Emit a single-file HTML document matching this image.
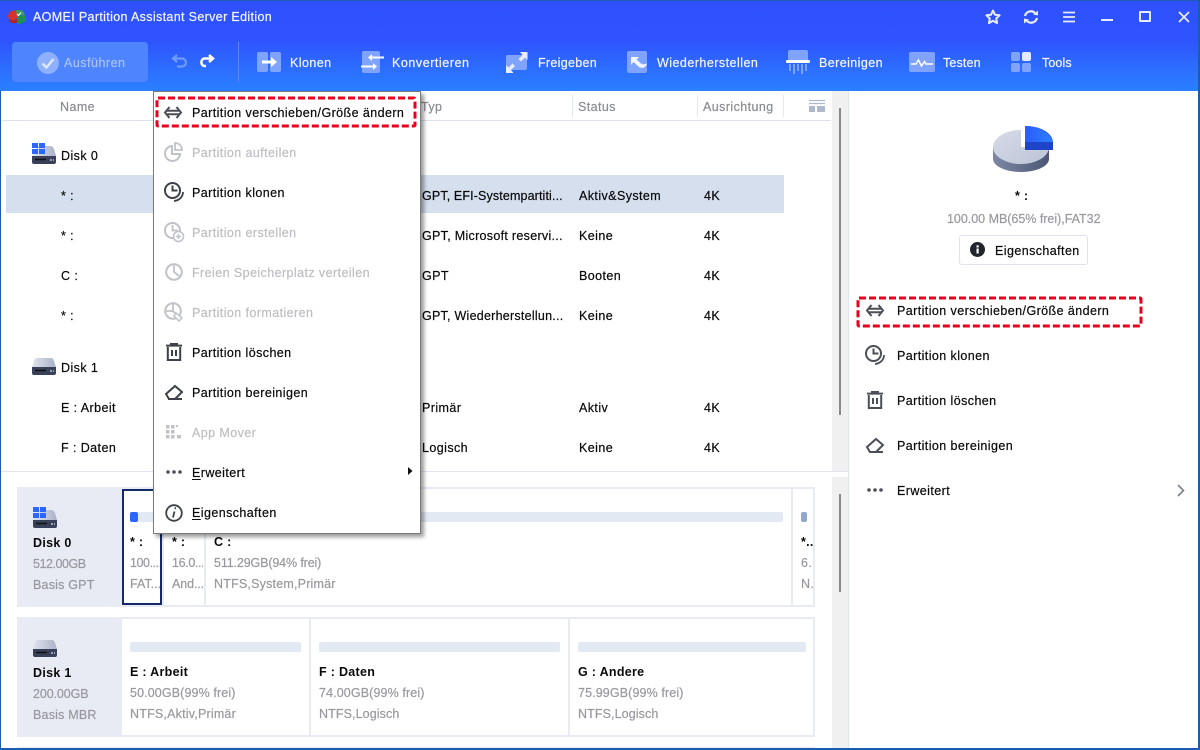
<!DOCTYPE html>
<html><head><meta charset="utf-8"><style>
*{box-sizing:border-box}
html,body{margin:0;padding:0;width:1200px;height:750px;overflow:hidden;background:#fff}
body{position:relative;font-family:"Liberation Sans","DejaVu Sans",sans-serif;font-size:12.5px;color:#0a0a0a}
.a{position:absolute}
.t{position:absolute;line-height:20px;height:20px;white-space:nowrap;letter-spacing:.42px;-webkit-text-stroke:.2px currentColor}
.w{color:#f2f5ff}
.g{color:#98999e}
.d{color:#bcbec3}
.h{color:#8a8c92}
.b{font-weight:bold;letter-spacing:.3px;-webkit-text-stroke:0}
svg{position:absolute;overflow:visible}
u{text-underline-offset:2px}
</style></head><body>
<div class="a" style="left:0;top:0;width:1200px;height:91px;background:linear-gradient(#2f50ff 0,#2f54ff 40px,#2a80ff 91px)"></div>
<div class="a" style="left:0;top:0;width:1200px;height:1px;background:#1d5bb0"></div>

<svg style="left:8px;top:9px" width="19" height="16" viewBox="0 0 19 16"><path d="M0 7a7 6 0 0 1 9-5.500L10 8l-5 4-4-1.500z" fill="#d8322c"/><path d="M8 1l7 .5 2 4.500-8 1z" fill="#36a35a"/><path d="M9 7l9-.5V12l-7 3.500-2-1z" fill="#1d9150"/><path d="M1 9.500l4 2.500 4-2.500v4l-4 1-4-2z" fill="#a82626"/><path d="M9 5l1.500 1.500L13 3.500" fill="none" stroke="#fff" stroke-width="1"/></svg>
<span class="t w" style="left:33px;top:7px;letter-spacing:.35px">AOMEI Partition Assistant Server Edition</span>

<svg style="left:985px;top:9px" width="16" height="16" viewBox="0 0 16 16"><path d="M8 1.500l2 4.200 4.600.6-3.400 3.200.9 4.600L8 11.800l-4.100 2.300.9-4.600L1.400 6.300 6 5.700z" fill="none" stroke="#e6ebff" stroke-width="2" stroke-linejoin="round"/></svg>
<svg style="left:1023px;top:9px" width="16" height="16" viewBox="0 0 16 16"><path d="M2 7a6 6 0 0 1 10-3M14 9a6 6 0 0 1-10 3" fill="none" stroke="#e6ebff" stroke-width="2.200"/><path d="M10 5.500l5 1 0-5zM6 10.500l-5-1 0 5z" fill="#e6ebff"/></svg>
<svg style="left:1063px;top:11px" width="12" height="12" viewBox="0 0 12 12"><path d="M0 1.500h12M0 6h12M0 10.500h12" stroke="#e6ebff" stroke-width="1.800"/></svg>
<div class="a" style="left:1101px;top:19px;width:12px;height:2px;background:#e6ebff"></div>
<div class="a" style="left:1139px;top:11px;width:12px;height:11px;border:2px solid #e6ebff;border-radius:1px"></div>
<svg style="left:1178px;top:11px" width="12" height="12" viewBox="0 0 12 12"><path d="M1 1l10 10M11 1L1 11" stroke="#e6ebff" stroke-width="1.800"/></svg>

<div class="a" style="left:12px;top:42px;width:136px;height:40px;background:#4f84ff;border-radius:4px"></div>
<svg style="left:37px;top:52px" width="22" height="22" viewBox="0 0 22 22"><circle cx="11" cy="11" r="11" fill="#8eb0ff"/><path d="M5.500 11.500l4 4 7-8.500" fill="none" stroke="#dfe8ff" stroke-width="2.400"/></svg>
<span class="t" style="left:64px;top:53px;color:#a9c2ff;letter-spacing:.5px">Ausführen</span>

<svg style="left:172px;top:54px" width="16" height="14" viewBox="0 0 16 14"><path d="M5 1L1 4.500 5 8M2 4.500h8a4 4 0 0 1 0 8H5" fill="none" stroke="#6f9aff" stroke-width="2.200"/></svg>
<svg style="left:198px;top:54px" width="16" height="14" viewBox="0 0 16 14"><path d="M11 1l4 3.500L11 8M14 4.500H6a4 4 0 0 0 0 7.500h2" fill="none" stroke="#fff" stroke-width="2.500"/></svg>
<div class="a" style="left:238px;top:42px;width:1px;height:40px;background:#5d85ff"></div>

<svg style="left:257px;top:52px" width="24" height="20" viewBox="0 0 24 20"><rect x="0" width="11" height="20" rx="2" fill="#7fa3ff"/><rect x="13" width="11" height="20" rx="2" fill="#7fa3ff"/><path d="M5 8.500h9V5l6 5-6 5v-3.500H5z" fill="#fff"/></svg>
<span class="t w" style="left:290px;top:53px">Klonen</span>

<svg style="left:361px;top:51px" width="24" height="22" viewBox="0 0 24 22"><rect x="1" width="18" height="22" rx="2" fill="#7fa3ff"/><path d="M23 7.500H11V10L7 6.500 11 3v2.500h12zM0 14.500h12V12l4 3.500-4 3.500v-2.500H0z" fill="#fff"/></svg>
<span class="t w" style="left:392px;top:53px;letter-spacing:.55px">Konvertieren</span>

<svg style="left:506px;top:52px" width="22" height="21" viewBox="0 0 22 21"><rect x="0" y="3" width="21" height="15" rx="2" fill="#7fa3ff"/><path d="M21.500 0v8l-2.500-2.500-4 4-2.500-2.500 4-4L14 0zM0 21v-8l2.500 2.500 4-4 2.500 2.500-4 4L7.500 21z" fill="#e8eeff"/></svg>
<span class="t w" style="left:538px;top:53px;letter-spacing:.3px">Freigeben</span>

<svg style="left:627px;top:51px" width="22" height="22" viewBox="0 0 22 22"><rect width="20" height="22" rx="2" fill="#7fa3ff"/><path d="M4 6h8l-2.500 2.500 4.500 4c1.500 1.200 3 1 6 0-1 4-5 5.500-8 3.500L6.500 11 4 14z" fill="#f2f5ff"/></svg>
<span class="t w" style="left:657px;top:53px;letter-spacing:.47px">Wiederherstellen</span>

<svg style="left:786px;top:50px" width="24" height="24" viewBox="0 0 24 24"><rect x="2" width="20" height="11" rx="2" fill="#7fa3ff"/><rect x="0" y="10" width="24" height="3" rx="1" fill="#fff"/><path d="M4 14v7M8 14v10M12 14v7M16 14v10M20 14v7" stroke="#7fa3ff" stroke-width="2"/></svg>
<span class="t w" style="left:819px;top:53px">Bereinigen</span>

<svg style="left:909px;top:52px" width="26" height="20" viewBox="0 0 26 20"><rect width="26" height="20" rx="2" fill="#7fa3ff"/><path d="M2 12h5l2.500-4 3 6 3-4.500 1.500 2.500h7" fill="none" stroke="#fff" stroke-width="1.500"/></svg>
<span class="t w" style="left:943px;top:53px;letter-spacing:.15px">Testen</span>

<svg style="left:1011px;top:52px" width="20" height="20" viewBox="0 0 20 20"><rect width="9" height="9" rx="2" fill="#7fa3ff"/><rect x="11" width="9" height="9" rx="2" fill="#e3eaff"/><rect y="11" width="9" height="9" rx="2" fill="#7fa3ff"/><rect x="11" y="11" width="9" height="9" rx="2" fill="#7fa3ff"/></svg>
<span class="t w" style="left:1042px;top:53px;letter-spacing:.1px">Tools</span>

<div class="a" style="left:0;top:91px;width:1px;height:659px;background:#1d5bb0"></div>
<div class="a" style="right:0;top:0;width:2px;height:750px;background:#1d5bb0"></div>
<div class="a" style="left:0;top:748px;width:1200px;height:2px;background:#1d5bb0"></div>

<!-- table header -->
<span class="t h" style="left:60px;top:97px">Name</span>
<span class="t h" style="left:421px;top:97px">Typ</span>
<span class="t h" style="left:578px;top:97px">Status</span>
<span class="t h" style="left:703px;top:97px;letter-spacing:.42px">Ausrichtung</span>
<div class="a" style="left:2px;top:120px;width:829px;height:1px;background:#dce2ee"></div>
<div class="a" style="left:572px;top:95px;width:1px;height:22px;background:#e6e9f1"></div>
<div class="a" style="left:697px;top:95px;width:1px;height:22px;background:#e6e9f1"></div>
<div class="a" style="left:783px;top:95px;width:1px;height:22px;background:#e6e9f1"></div>
<svg style="left:809px;top:100px" width="16" height="13" viewBox="0 0 16 13"><path d="M0 .5h16M0 3.500h16" stroke="#aeb9cd" stroke-width="1.200"/><rect y="6" width="6" height="6" fill="#aeb9cd"/><rect x="8" y="6" width="8" height="6" fill="#aeb9cd"/></svg>

<!-- scrollbars -->
<div class="a" style="left:832px;top:91px;width:16px;height:380px;background:#f0f0f0"></div>
<div class="a" style="left:839px;top:108px;width:2px;height:307px;background:#8a8a8a"></div>
<div class="a" style="left:848px;top:91px;width:1px;height:657px;background:#dfe4f2"></div>
<div class="a" style="left:832px;top:477px;width:16px;height:271px;background:#f0f0f0"></div>
<div class="a" style="left:839px;top:494px;width:2px;height:98px;background:#8a8a8a"></div>

<!-- rows -->
<div class="a" style="left:6px;top:175px;width:778px;height:38px;background:#d5dfee"></div>

<svg style="left:32px;top:143px" width="24" height="21" viewBox="0 0 24 21"><defs><linearGradient id="dk" x1="0" x2="1"><stop offset="0" stop-color="#dfe3ec"/><stop offset="1" stop-color="#aab2c8"/></linearGradient></defs><path d="M6 3h12c2 0 3 1 4 3l2 7H0z" fill="url(#dk)"/><path d="M0 13h24v6a2 2 0 0 1-2 2H2a2 2 0 0 1-2-2z" fill="#39415a"/><path d="M3 16.500h11" stroke="#111" stroke-width="1.500"/><path d="M18 17h2M21 17h1" stroke="#fff"/><rect width="6" height="5" fill="#2a66ff"/><rect x="7" width="6" height="5" fill="#2a66ff"/><rect y="6" width="6" height="5" fill="#2a66ff"/><rect x="7" y="6" width="6" height="5" fill="#2a66ff"/></svg>
<span class="t" style="left:61px;top:146px">Disk 0</span>
<span class="t" style="left:61px;top:186px">* :</span>
<span class="t" style="left:61px;top:226px">* :</span>
<span class="t" style="left:61px;top:266px">C :</span>
<span class="t" style="left:61px;top:306px">* :</span>
<svg style="left:32px;top:358px" width="24" height="17" viewBox="0 0 24 17"><path d="M5 0h14c1.500 0 2.500 1 3 3l2 6H0l2-6c.5-2 1.500-3 3-3z" fill="url(#dk)"/><path d="M0 9h24v6a2 2 0 0 1-2 2H2a2 2 0 0 1-2-2z" fill="#39415a"/><path d="M3 12.500h11" stroke="#111" stroke-width="1.500"/><path d="M18 13h2M21 13h1" stroke="#fff"/></svg>
<span class="t" style="left:61px;top:358px">Disk 1</span>
<span class="t" style="left:61px;top:398px">E : Arbeit</span>
<span class="t" style="left:61px;top:438px">F : Daten</span>

<span class="t" style="left:422px;top:186px;letter-spacing:.13px">GPT, EFI-Systempartiti...</span>
<span class="t" style="left:422px;top:226px;letter-spacing:.3px">GPT, Microsoft reservi...</span>
<span class="t" style="left:422px;top:266px">GPT</span>
<span class="t" style="left:422px;top:306px;letter-spacing:.25px">GPT, Wiederherstellun...</span>
<span class="t" style="left:422px;top:398px">Primär</span>
<span class="t" style="left:422px;top:438px">Logisch</span>
<span class="t" style="left:579px;top:186px">Aktiv&amp;System</span>
<span class="t" style="left:579px;top:226px">Keine</span>
<span class="t" style="left:579px;top:266px">Booten</span>
<span class="t" style="left:579px;top:306px">Keine</span>
<span class="t" style="left:579px;top:398px">Aktiv</span>
<span class="t" style="left:579px;top:438px">Keine</span>
<span class="t" style="left:704px;top:186px">4K</span>
<span class="t" style="left:704px;top:226px">4K</span>
<span class="t" style="left:704px;top:266px">4K</span>
<span class="t" style="left:704px;top:306px">4K</span>
<span class="t" style="left:704px;top:398px">4K</span>
<span class="t" style="left:704px;top:438px">4K</span>

<div class="a" style="left:1px;top:471px;width:847px;height:1px;background:#e3e6ee"></div>

<!-- Disk 0 card -->
<div class="a" style="left:17px;top:487px;width:798px;height:120px;background:#e8ebf3"></div>
<div class="a" style="left:122px;top:489px;width:40px;height:116px;background:#fff;border:2px solid #14296b"></div>
<div class="a" style="left:164px;top:489px;width:40px;height:116px;background:#fff"></div>
<div class="a" style="left:206px;top:489px;width:585px;height:116px;background:#fff"></div>
<div class="a" style="left:793px;top:489px;width:20px;height:116px;background:#fff"></div>
<div class="a" style="left:130px;top:512px;width:653px;height:10px;background:#e3e9f3;border-radius:2px"></div>
<div class="a" style="left:130px;top:512px;width:8px;height:10px;background:#2a66ff;border-radius:2px"></div>
<div class="a" style="left:801px;top:512px;width:6px;height:10px;background:#8fa8d0;border-radius:2px"></div>

<svg style="left:33px;top:507px" width="24" height="21" viewBox="0 0 24 21"><path d="M6 3h12c2 0 3 1 4 3l2 7H0z" fill="url(#dk)"/><path d="M0 13h24v6a2 2 0 0 1-2 2H2a2 2 0 0 1-2-2z" fill="#39415a"/><path d="M3 16.500h11" stroke="#111" stroke-width="1.500"/><path d="M18 17h2M21 17h1" stroke="#fff"/><rect width="6" height="5" fill="#2a66ff"/><rect x="7" width="6" height="5" fill="#2a66ff"/><rect y="6" width="6" height="5" fill="#2a66ff"/><rect x="7" y="6" width="6" height="5" fill="#2a66ff"/></svg>
<span class="t b" style="left:33px;top:533px">Disk 0</span>
<span class="t g" style="left:33px;top:554px;letter-spacing:-.45px">512.00GB</span>
<span class="t g" style="left:33px;top:575px;letter-spacing:.2px">Basis GPT</span>
<span class="t b" style="left:130px;top:532px">* :</span>
<span class="t g" style="left:130px;top:553px;letter-spacing:-.45px;width:30px;overflow:hidden">100....</span>
<span class="t g" style="left:130px;top:574px;letter-spacing:0;width:30px;overflow:hidden">FAT...</span>
<span class="t b" style="left:172px;top:532px">* :</span>
<span class="t g" style="left:172px;top:553px;letter-spacing:-.35px;width:31px;overflow:hidden">16.0...</span>
<span class="t g" style="left:172px;top:574px;letter-spacing:-.1px;width:31px;overflow:hidden">And...</span>
<span class="t b" style="left:214px;top:532px">C :</span>
<span class="t g" style="left:214px;top:553px;letter-spacing:-.13px">511.29GB(94% frei)</span>
<span class="t g" style="left:214px;top:574px;letter-spacing:.2px">NTFS,System,Primär</span>
<span class="t b" style="left:801px;top:532px;width:12px;overflow:hidden">*..</span>
<span class="t g" style="left:801px;top:553px;width:12px;overflow:hidden">6..</span>
<span class="t g" style="left:801px;top:574px;width:12px;overflow:hidden">N.</span>

<!-- Disk 1 card -->
<div class="a" style="left:17px;top:617px;width:798px;height:120px;background:#e8ebf3"></div>
<div class="a" style="left:122px;top:619px;width:187px;height:116px;background:#fff"></div>
<div class="a" style="left:311px;top:619px;width:257px;height:116px;background:#fff"></div>
<div class="a" style="left:570px;top:619px;width:243px;height:116px;background:#fff"></div>
<div class="a" style="left:130px;top:642px;width:171px;height:10px;background:#e3e9f3;border-radius:2px"></div>
<div class="a" style="left:319px;top:642px;width:241px;height:10px;background:#e3e9f3;border-radius:2px"></div>
<div class="a" style="left:578px;top:642px;width:228px;height:10px;background:#e3e9f3;border-radius:2px"></div>
<svg style="left:33px;top:640px" width="24" height="17" viewBox="0 0 24 17"><path d="M5 0h14c1.500 0 2.500 1 3 3l2 6H0l2-6c.5-2 1.500-3 3-3z" fill="url(#dk)"/><path d="M0 9h24v6a2 2 0 0 1-2 2H2a2 2 0 0 1-2-2z" fill="#39415a"/><path d="M3 12.500h11" stroke="#111" stroke-width="1.500"/><path d="M18 13h2M21 13h1" stroke="#fff"/></svg>
<span class="t b" style="left:33px;top:663px">Disk 1</span>
<span class="t g" style="left:33px;top:684px;letter-spacing:-.1px">200.00GB</span>
<span class="t g" style="left:33px;top:705px;letter-spacing:.2px">Basis MBR</span>
<span class="t b" style="left:130px;top:662px">E : Arbeit</span>
<span class="t g" style="left:130px;top:683px;letter-spacing:.12px">50.00GB(99% frei)</span>
<span class="t g" style="left:130px;top:704px;letter-spacing:.2px">NTFS,Aktiv,Primär</span>
<span class="t b" style="left:319px;top:662px">F : Daten</span>
<span class="t g" style="left:319px;top:683px;letter-spacing:.12px">74.00GB(99% frei)</span>
<span class="t g" style="left:319px;top:704px;letter-spacing:.1px">NTFS,Logisch</span>
<span class="t b" style="left:578px;top:662px">G : Andere</span>
<span class="t g" style="left:578px;top:683px;letter-spacing:.12px">75.99GB(99% frei)</span>
<span class="t g" style="left:578px;top:704px;letter-spacing:.1px">NTFS,Logisch</span>
<div class="a" style="left:17px;top:747px;width:798px;height:1px;background:#e8ebf3"></div>

<!-- Right panel -->
<svg style="left:990px;top:124px" width="66" height="52" viewBox="0 0 66 52">
<defs><linearGradient id="p1" x1="0" y1="0" x2="1" y2="1"><stop offset="0" stop-color="#d6dbe8"/><stop offset="1" stop-color="#bcc4d6"/></linearGradient><linearGradient id="p2" x1="0" x2="1"><stop offset="0" stop-color="#7d88a4"/><stop offset="1" stop-color="#4b5674"/></linearGradient><linearGradient id="p3" x1="0" x2="1"><stop offset="0" stop-color="#2a5cff"/><stop offset="1" stop-color="#2a80ff"/></linearGradient></defs>
<path d="M3 23v12c0 7 12.500 13 28 13s28-6 28-13V23z" fill="url(#p2)"/>
<ellipse cx="31" cy="23" rx="28" ry="17" fill="url(#p1)"/>
<rect x="31" y="0" width="4" height="23" fill="#fff"/>
<path d="M35 2c14 0 27 6 28 16v8H35z" fill="#1f44c8"/>
<path d="M35 2c14 0 25 6 28 16H35z" fill="url(#p3)"/>
</svg>
<span class="t b" style="left:1015px;top:186px">* :</span>
<span class="t g" style="left:947px;top:209px;letter-spacing:-.02px">100.00 MB(65% frei),FAT32</span>
<div class="a" style="left:959px;top:235px;width:129px;height:30px;border:1px solid #dfe3ee;border-radius:3px;background:#fff"></div>
<svg style="left:970px;top:242px" width="15" height="15" viewBox="0 0 15 15"><circle cx="7.500" cy="7.500" r="7.500" fill="#22252c"/><rect x="6.500" y="6.500" width="2.200" height="5" fill="#fff"/><rect x="6.500" y="3.300" width="2.200" height="2.200" fill="#fff"/></svg>
<span class="t" style="left:995px;top:241px">Eigenschaften</span>

<svg style="left:855px;top:295px" width="288" height="33"><rect x="3" y="3" width="283" height="28" fill="none" stroke="#e8001c" stroke-width="3" stroke-dasharray="7 3" rx="1"/></svg>
<svg style="left:866px;top:304px" width="18" height="13" viewBox="0 0 18 13"><path d="M5.500 1L1 6.500 5.500 12M12.500 1L17 6.500 12.500 12M2 4.700h14M2 8.300h14" fill="none" stroke="#4c4f56" stroke-width="2"/></svg>
<span class="t" style="left:897px;top:301px">Partition verschieben/Größe ändern</span>
<svg style="left:865px;top:345px" width="20" height="20" viewBox="0 0 20 20"><circle cx="8.500" cy="8.500" r="7.500" fill="none" stroke="#4c4f56" stroke-width="2"/><path d="M8.500 3.500v5h5" fill="none" stroke="#4c4f56" stroke-width="2"/><path d="M19 10c0 5-4 8.500-9 9" fill="none" stroke="#4c4f56" stroke-width="1.800"/></svg>
<span class="t" style="left:897px;top:346px">Partition klonen</span>
<svg style="left:867px;top:391px" width="16" height="18" viewBox="0 0 16 18"><path d="M0 2.600h16M5 2.500V1h6v1.500M1.800 4v13h12.400V4M6 7v6M10 7v6" fill="none" stroke="#4c4f56" stroke-width="2"/></svg>
<span class="t" style="left:897px;top:391px">Partition löschen</span>
<svg style="left:866px;top:437px" width="18" height="17" viewBox="0 0 18 17"><path d="M1 10l9-8 7 6-7 7H4zM3 15h14" fill="none" stroke="#4c4f56" stroke-width="2"/></svg>
<span class="t" style="left:897px;top:436px">Partition bereinigen</span>
<svg style="left:867px;top:488px" width="16" height="4" viewBox="0 0 16 4"><circle cx="2" cy="2" r="1.800" fill="#4c4f56"/><circle cx="8" cy="2" r="1.800" fill="#4c4f56"/><circle cx="14" cy="2" r="1.800" fill="#4c4f56"/></svg>
<span class="t" style="left:897px;top:481px">Erweitert</span>
<svg style="left:1177px;top:484px" width="8" height="13" viewBox="0 0 8 13"><path d="M1 1l5.500 5.500L1 12" fill="none" stroke="#7c8088" stroke-width="1.600"/></svg>

<!-- Context menu -->
<div class="a" style="left:153px;top:91px;width:268px;height:443px;background:#fff;border:1px solid #7b7b7b;box-shadow:3px 3px 4px rgba(0,0,0,.4)"></div>
<svg style="left:154px;top:95px" width="264" height="33"><rect x="3" y="3" width="258" height="28" fill="none" stroke="#e8001c" stroke-width="3" stroke-dasharray="7 3" rx="1"/></svg>
<svg style="left:164px;top:106px" width="18" height="13" viewBox="0 0 18 13"><path d="M5.500 1L1 6.500 5.500 12M12.500 1L17 6.500 12.500 12M2 4.700h14M2 8.300h14" fill="none" stroke="#4c4f56" stroke-width="2"/></svg>
<span class="t" style="left:192px;top:103px">Partition verschieben/Größe ändern</span>
<svg style="left:164px;top:142px" width="20" height="20" viewBox="0 0 20 20"><path d="M8 4a7.500 7.500 0 1 0 8 8H8z" fill="none" stroke="#c0c2c7" stroke-width="2"/><path d="M11 1v7h7a7 7 0 0 0-7-7z" fill="none" stroke="#c0c2c7" stroke-width="1.800"/></svg>
<span class="t d" style="left:192px;top:143px">Partition aufteilen</span>
<svg style="left:164px;top:182px" width="20" height="20" viewBox="0 0 20 20"><circle cx="8.500" cy="8.500" r="7.500" fill="none" stroke="#3e4148" stroke-width="2"/><path d="M8.500 3.500v5h5" fill="none" stroke="#3e4148" stroke-width="2"/><path d="M19 10c0 5-4 8.500-9 9" fill="none" stroke="#3e4148" stroke-width="1.800"/></svg>
<span class="t" style="left:192px;top:183px">Partition klonen</span>
<svg style="left:164px;top:222px" width="20" height="20" viewBox="0 0 20 20"><circle cx="8.500" cy="8.500" r="7.500" fill="none" stroke="#c0c2c7" stroke-width="2"/><path d="M8.500 3v5.500H14" fill="none" stroke="#c0c2c7" stroke-width="1.800"/><circle cx="14.500" cy="14.500" r="5" fill="#fff" stroke="#c0c2c7" stroke-width="1.500"/><path d="M14.500 12v5M12 14.500h5" stroke="#c0c2c7" stroke-width="1.500"/></svg>
<span class="t d" style="left:192px;top:223px">Partition erstellen</span>
<svg style="left:165px;top:263px" width="18" height="18" viewBox="0 0 18 18"><circle cx="9" cy="9" r="7.800" fill="none" stroke="#c0c2c7" stroke-width="2"/><path d="M9 2.500V9l5 4" fill="none" stroke="#c0c2c7" stroke-width="1.800"/></svg>
<span class="t d" style="left:192px;top:263px">Freien Speicherplatz verteilen</span>
<svg style="left:164px;top:302px" width="20" height="20" viewBox="0 0 20 20"><circle cx="9" cy="9" r="7.800" fill="none" stroke="#c0c2c7" stroke-width="2"/><path d="M9 2v7H2M9 9l4.500 5" fill="none" stroke="#c0c2c7" stroke-width="1.800"/><path d="M12 11l6 5-3 3-5-5z" fill="#fff" stroke="#c0c2c7" stroke-width="1.500"/></svg>
<span class="t d" style="left:192px;top:303px">Partition formatieren</span>
<svg style="left:166px;top:343px" width="16" height="18" viewBox="0 0 16 18"><path d="M0 2.600h16M5 2.500V1h6v1.500M1.800 4v13h12.400V4M6 7v6M10 7v6" fill="none" stroke="#3e4148" stroke-width="2"/></svg>
<span class="t" style="left:192px;top:343px">Partition löschen</span>
<svg style="left:165px;top:384px" width="18" height="17" viewBox="0 0 18 17"><path d="M1 10l9-8 7 6-7 7H4zM3 15h14" fill="none" stroke="#3e4148" stroke-width="2"/></svg>
<span class="t" style="left:192px;top:383px">Partition bereinigen</span>
<svg style="left:166px;top:425px" width="16" height="15" viewBox="0 0 16 15"><g fill="#c0c2c7"><rect width="3.500" height="3.500" y="0"/><rect x="5" width="3.500" height="3.500"/><rect x="10" width="2" height="2"/><rect y="5" width="3.500" height="3.500"/><rect x="5" y="5" width="3.500" height="3.500"/><rect y="10" width="3.500" height="3.500"/><rect x="5" y="10" width="3.500" height="3.500"/><rect x="11" y="10" width="4" height="3.500"/></g></svg>
<span class="t d" style="left:192px;top:423px">App Mover</span>
<svg style="left:166px;top:470px" width="16" height="4" viewBox="0 0 16 4"><circle cx="2" cy="2" r="1.800" fill="#4c4f56"/><circle cx="8" cy="2" r="1.800" fill="#4c4f56"/><circle cx="14" cy="2" r="1.800" fill="#4c4f56"/></svg>
<span class="t" style="left:192px;top:463px"><u>E</u>rweitert</span>
<svg style="left:408px;top:467px" width="5" height="8" viewBox="0 0 5 8"><path d="M0 0l4.500 4L0 8z" fill="#111"/></svg>
<svg style="left:165px;top:504px" width="18" height="18" viewBox="0 0 18 18"><circle cx="9" cy="9" r="7.800" fill="none" stroke="#3e4148" stroke-width="1.800"/><path d="M9.600 4.200h1.400M9.500 7.500L8 13.500" fill="none" stroke="#3e4148" stroke-width="1.800"/></svg>
<span class="t" style="left:192px;top:503px"><u>E</u>igenschaften</span>
</body></html>
